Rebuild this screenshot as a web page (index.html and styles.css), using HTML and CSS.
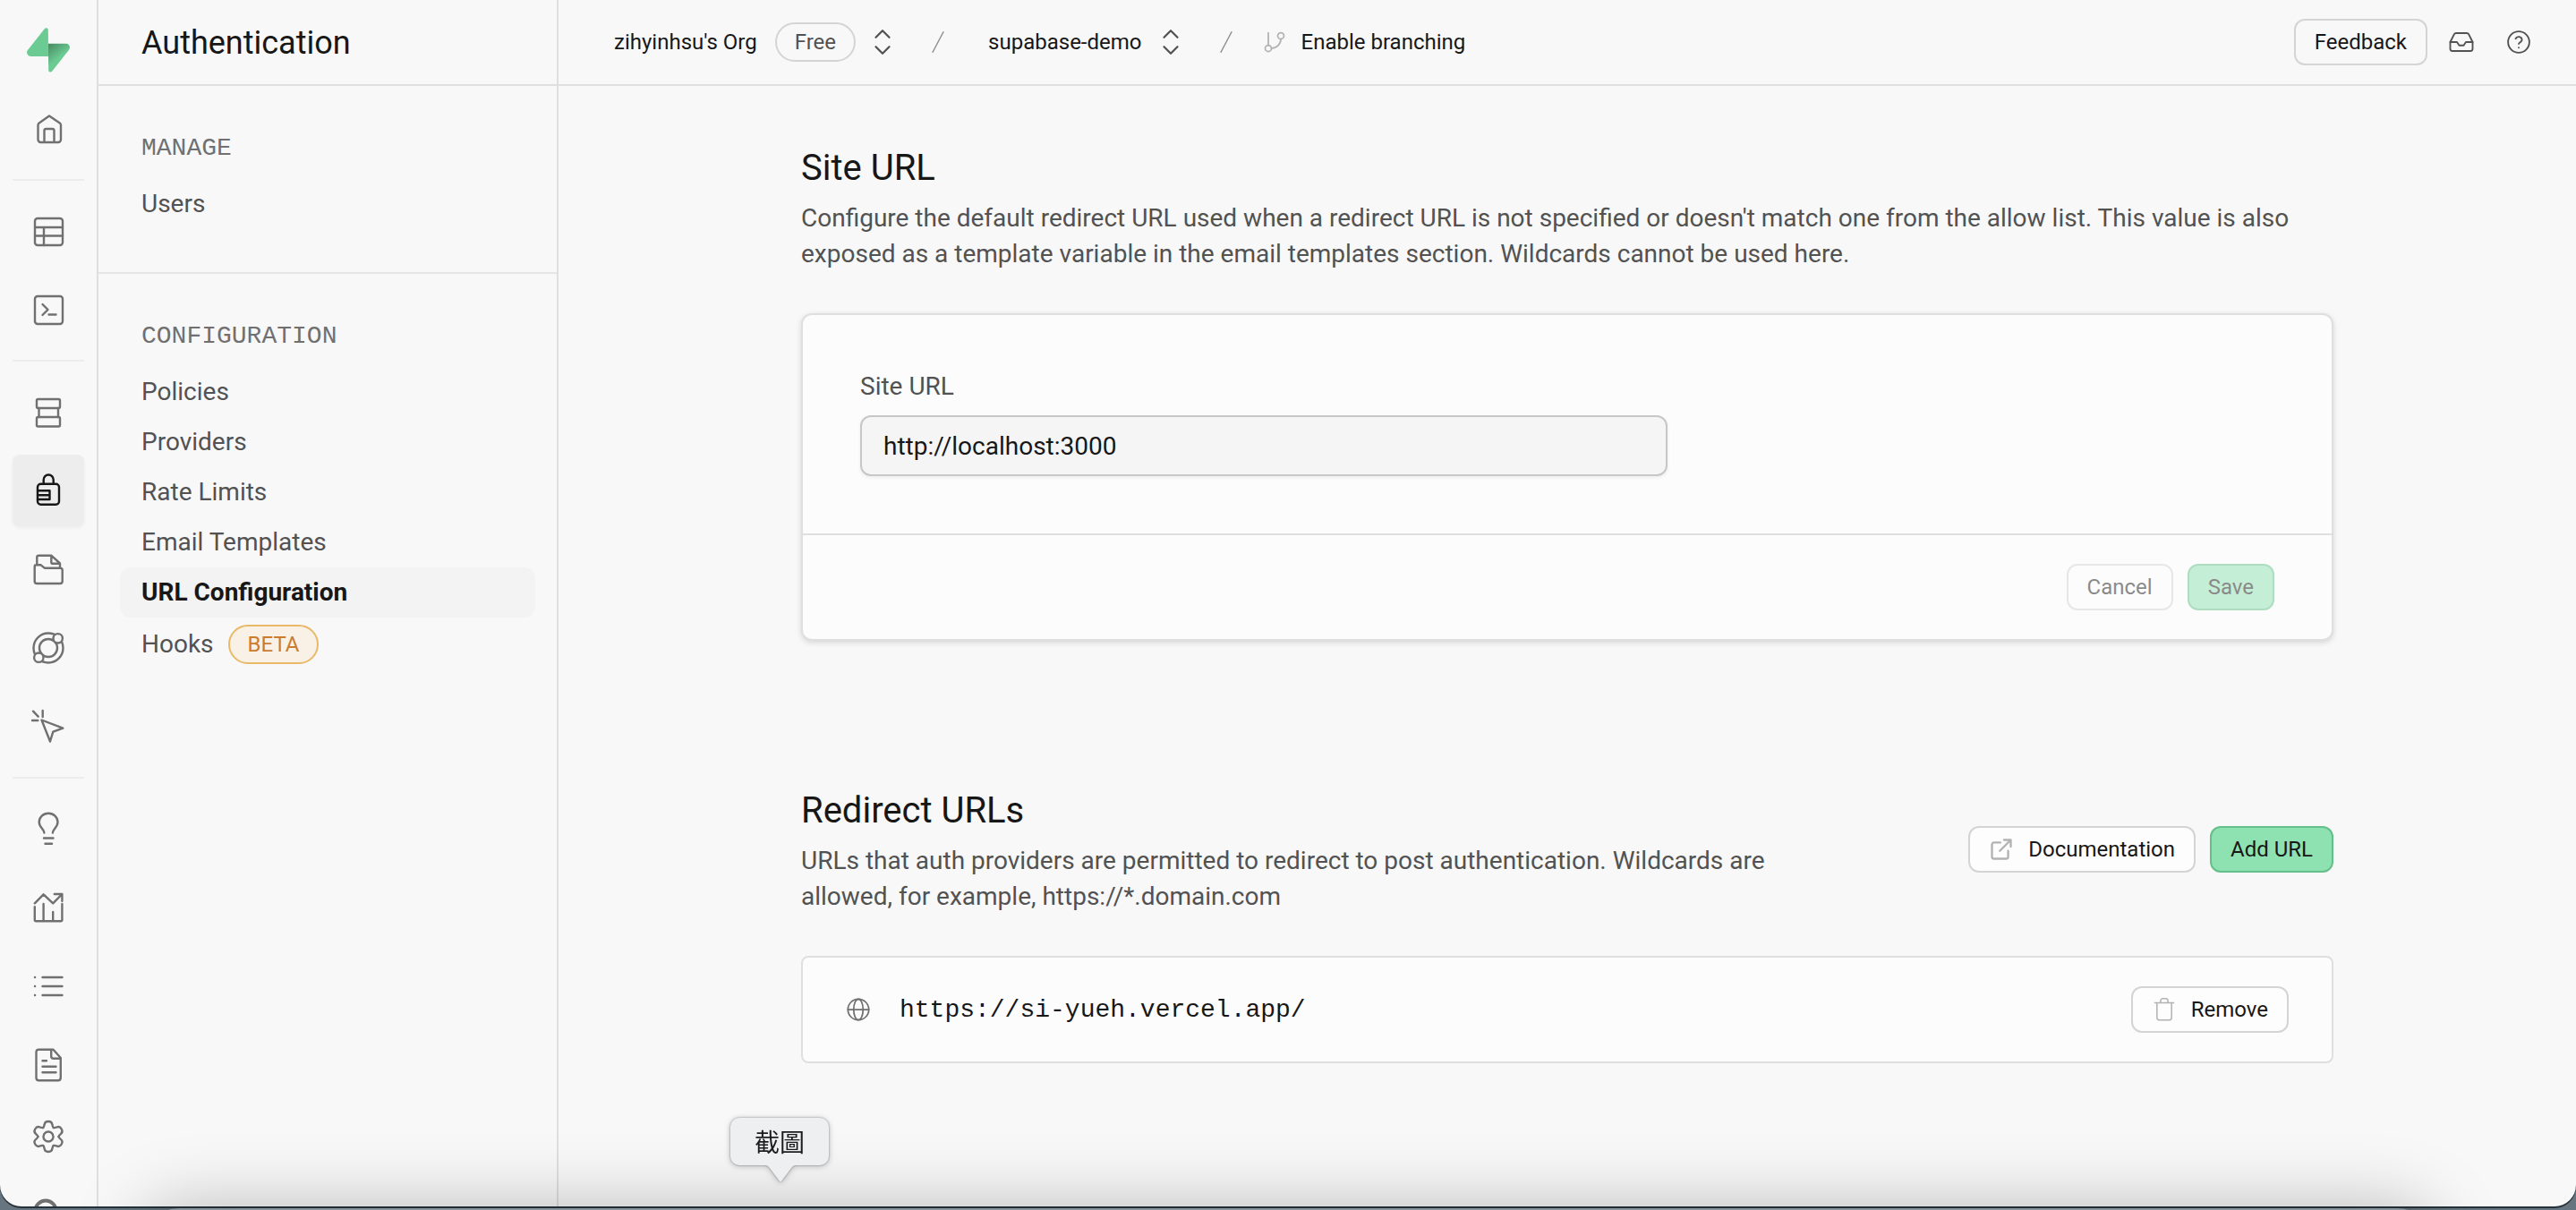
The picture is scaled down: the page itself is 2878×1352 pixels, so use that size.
FILE: index.html
```html
<!DOCTYPE html>
<html lang="en">
<head>
<meta charset="utf-8">
<meta name="viewport" content="width=device-width, initial-scale=1">
<title>URL Configuration | Authentication</title>
<link rel="stylesheet" href="styles.css">
</head>
<body>
<div class="window">
  <nav class="rail" aria-label="Project">
    <a class="rail-logo" href="#" aria-label="Supabase">
      <svg width="48" height="50" viewBox="0 0 109 113" fill="none">
        <defs>
          <linearGradient id="bolt" x1="54" y1="40" x2="82" y2="76" gradientUnits="userSpaceOnUse">
            <stop stop-color="#47885f"/><stop offset="1" stop-color="#6bcb93"/>
          </linearGradient>
        </defs>
        <path fill="url(#bolt)" d="M63.708 110.284c-2.86 3.601-8.658 1.628-8.727-2.97l-1.007-67.251h45.22c8.19 0 12.758 9.46 7.665 15.874L63.708 110.284Z"/>
        <path fill="#6bcb93" d="M45.317 2.071c2.86-3.601 8.657-1.628 8.726 2.97l.442 67.251H9.83c-8.19 0-12.759-9.46-7.665-15.875L45.317 2.071Z"/>
      </svg>
    </a>
    <a class="rail-item" href="#" aria-label="Home"><svg class="icon" viewBox="0 0 40 40"><path d="M21 5.500 9.700 13.400Q8.500 14.300 8.500 16V32a3 3 0 0 0 3 3H31a3 3 0 0 0 3-3V16q0-1.700-1.200-2.600ZM15.500 35V22q0-2 2-2h7q2 0 2 2v13"/></svg></a>
    <hr class="rail-rule">
    <a class="rail-item" href="#" aria-label="Table Editor"><svg class="icon" viewBox="0 0 40 40"><rect x="5" y="6" width="31" height="30" rx="3"/><path d="M5 16h31M5 25.500h31M15 16v20"/></svg></a>
    <a class="rail-item" href="#" aria-label="SQL Editor"><svg class="icon" viewBox="0 0 40 40"><rect x="5" y="5" width="31" height="31" rx="3"/><path d="m13.500 14 6 6-6 6M20.500 25.500h8"/></svg></a>
    <hr class="rail-rule">
    <a class="rail-item" href="#" aria-label="Database"><svg class="icon" viewBox="0 0 40 40"><rect x="7" y="6" width="26" height="10" rx="1.500"/><path d="M9.500 16v10M31 16v10"/><rect x="7" y="26" width="26" height="10.500" rx="1.500"/></svg></a>
    <a class="rail-item rail-item-active" href="#" aria-label="Authentication" aria-current="page"><svg class="icon" viewBox="0 0 40 40"><rect x="8" y="12.700" width="24" height="23" rx="3.500"/><path d="M14.700 12.700V8a5.500 5.500 0 0 1 11 0v4.700M8 20.300h13.500V30H8M8 25.200h13.500"/></svg></a>
    <a class="rail-item" href="#" aria-label="Storage"><svg class="icon" viewBox="0 0 40 40"><path d="M7.300 15.300V6.500q0-1.800 1.800-1.800h14.200L33 13.500v5.200M23.300 4.700v7.500q0 1.600 1.600 1.600H33M4.700 17q0-1.700 1.700-1.700h5.300l4 3.400h17.600q2.400 0 2.400 2.400v12.400q0 2.500-2.500 2.500H7.200q-2.500 0-2.500-2.500Z"/></svg></a>
    <a class="rail-item" href="#" aria-label="Realtime"><svg class="icon" viewBox="0 0 40 40"><circle cx="20" cy="20" r="16.500"/><circle cx="20" cy="20" r="10"/><circle class="knob" cx="30.700" cy="9.300" r="5.200"/><circle class="knob" cx="9.300" cy="30.700" r="5.200"/></svg></a>
    <a class="rail-item" href="#" aria-label="Advisors"><svg class="icon" viewBox="0 0 40 40"><path d="m12.500 12.500 23.800 9.200-11 4-3.300 10.800ZM13.700 2v7M3 2.700l5.700 6M2 13h6.300"/></svg></a>
    <hr class="rail-rule">
    <a class="rail-item" href="#" aria-label="Assistant"><svg class="icon" viewBox="0 0 40 40"><path d="M15.400 24.500c0-4-5.700-6-5.700-12a10.400 9.800 0 0 1 20.800 0c0 6-5.600 8-5.600 12M15 30.500h10.500M16.500 36.700H24"/></svg></a>
    <a class="rail-item" href="#" aria-label="Reports"><svg class="icon" viewBox="0 0 40 40"><path d="m4.800 15.300 9.800-10 10.600 10L35.400 5M26.800 5h8.600v7.700M4.800 19.300v14.500q0 1.500 1.500 1.500h27.600q1.500 0 1.500-1.500V16M14.600 16v19M25.200 25v10"/></svg></a>
    <a class="rail-item" href="#" aria-label="Logs"><svg class="icon" viewBox="0 0 40 40"><path d="M13.500 10h22M13.500 20h22M13.500 30h22M5 10h.1M5 20h.1M5 30h.1"/></svg></a>
    <a class="rail-item" href="#" aria-label="API Docs"><svg class="icon" viewBox="0 0 40 40"><path d="M9.500 2.700h16L33.800 12v22.200q0 3-3 3H9.500q-3 0-3-3V5.700q0-3 3-3ZM23.200 2.700v7.500q0 2.500 2.500 2.500h8.100M13.500 15.300H18M13.500 21.700h15M13.500 28.300h15"/></svg></a>
    <div class="rail-bottom">
      <a class="rail-item" href="#" aria-label="Project Settings"><svg class="icon" viewBox="-20 -20 40 40">
        <defs><path id="lobe" d="M-5.800-10c.9-.6 1.200-2 1.500-3.700C-4-16-2.200-17 0-17s4 1 4.300 3.300c.3 1.700.6 3.100 1.500 3.700"/></defs>
        <circle r="5.500"/><use href="#lobe"/><use href="#lobe" transform="rotate(60)"/><use href="#lobe" transform="rotate(120)"/><use href="#lobe" transform="rotate(180)"/><use href="#lobe" transform="rotate(240)"/><use href="#lobe" transform="rotate(300)"/></svg></a>
      <a class="rail-item" href="#" aria-label="Account"><svg class="icon icon-bold" viewBox="0 0 40 40"><circle cx="17" cy="23" r="11.500"/></svg></a>
    </div>
  </nav>

  <aside class="menu">
    <header class="menu-head"><h1>Authentication</h1></header>
    <section class="menu-group">
      <h2>MANAGE</h2>
      <ul><li><a href="#">Users</a></li></ul>
    </section>
    <section class="menu-group">
      <h2>CONFIGURATION</h2>
      <ul>
        <li><a href="#">Policies</a></li>
        <li><a href="#">Providers</a></li>
        <li><a href="#">Rate Limits</a></li>
        <li><a href="#">Email Templates</a></li>
        <li><a class="current" href="#" aria-current="page">URL Configuration</a></li>
        <li><a class="with-badge" href="#">Hooks <span class="badge badge-beta">BETA</span></a></li>
      </ul>
    </section>
  </aside>

  <div class="page">
    <header class="topbar">
      <nav class="crumbs" aria-label="Breadcrumb">
        <a class="crumb-org" href="#">zihyinhsu's Org <span class="badge">Free</span></a>
        <button class="switcher" type="button" aria-label="Switch organization"><svg width="36" height="36" viewBox="0 0 24 24"><path d="m7 15.500 5 5 5-5M7 8.500l5-5 5 5"/></svg></button>
        <svg class="slash" width="32" height="32" viewBox="0 0 24 24"><path d="M16.500 3.500 7.500 20.500"/></svg>
        <a class="crumb-project" href="#">supabase-demo</a>
        <button class="switcher" type="button" aria-label="Switch project"><svg width="36" height="36" viewBox="0 0 24 24"><path d="m7 15.500 5 5 5-5M7 8.500l5-5 5 5"/></svg></button>
        <svg class="slash" width="32" height="32" viewBox="0 0 24 24"><path d="M16.500 3.500 7.500 20.500"/></svg>
        <button class="branching" type="button"><svg width="28" height="28" viewBox="0 0 24 24"><path d="M6 3v12"/><circle cx="18" cy="6" r="3"/><circle cx="6" cy="18" r="3"/><path d="M18 9a9 9 0 0 1-9 9"/></svg>Enable branching</button>
      </nav>
      <div class="tools">
        <button class="btn btn-clear" type="button">Feedback</button>
        <button class="tool" type="button" aria-label="Notifications"><svg width="30" height="30" viewBox="0 0 24 24"><path d="M22 12h-6l-2 3h-4l-2-3H2"/><path d="M5.450 5.110 2 12v6a2 2 0 0 0 2 2h16a2 2 0 0 0 2-2v-6l-3.450-6.890A2 2 0 0 0 16.760 4H7.240a2 2 0 0 0-1.790 1.110z"/></svg></button>
        <button class="tool" type="button" aria-label="Help"><svg width="30" height="30" viewBox="0 0 24 24"><circle cx="12" cy="12" r="9.500"/><path d="M9.200 9a3 3 0 0 1 5.700 1c0 2-2.900 2.500-2.900 3.500M12 17h.01"/></svg></button>
      </div>
    </header>

    <main class="content">
      <section>
        <div class="section-text">
          <h2>Site URL</h2>
          <p>Configure the default redirect URL used when a redirect URL is not specified or doesn't match one from the allow list. This value is also exposed as a template variable in the email templates section. Wildcards cannot be used here.</p>
        </div>
        <form class="card">
          <div class="card-body">
            <div class="field">
              <label for="site-url">Site URL</label>
              <input id="site-url" type="text" value="http://localhost:3000">
            </div>
          </div>
          <footer class="card-foot">
            <button class="btn" type="reset" disabled>Cancel</button>
            <button class="btn btn-primary" type="submit" disabled>Save</button>
          </footer>
        </form>
      </section>

      <section>
        <div class="section-row">
          <div class="section-text section-text-narrow">
            <h2>Redirect URLs</h2>
            <p>URLs that auth providers are permitted to redirect to post authentication. Wildcards are allowed, for example, https://*.domain.com</p>
          </div>
          <div class="actions">
            <a class="btn" href="#"><svg width="28" height="28" viewBox="0 0 24 24"><path d="M14.500 3H21v6.500M21 3 10.500 13.500M18.500 13.500V19a2 2 0 0 1-2 2H5a2 2 0 0 1-2-2V7.500a2 2 0 0 1 2-2h6"/></svg>Documentation</a>
            <button class="btn btn-primary" type="button">Add URL</button>
          </div>
        </div>
        <ul class="url-list">
          <li>
            <svg class="globe" width="28" height="28" viewBox="0 0 24 24"><circle cx="12" cy="12" r="10"/><ellipse cx="12" cy="12" rx="4.500" ry="10"/><path d="M2 12h20"/></svg>
            <code>https://si-yueh.vercel.app/</code>
            <button class="btn btn-remove" type="button"><svg width="28" height="28" viewBox="0 0 24 24"><path d="M3 5.500h18M5 5.500V20a2 2 0 0 0 2 2h10a2 2 0 0 0 2-2V5.500M8.500 5.500V3.500a2 2 0 0 1 2-2h3a2 2 0 0 1 2 2v2"/></svg>Remove</button>
          </li>
        </ul>
      </section>
    </main>
  </div>
</div>

<div class="dock" aria-hidden="true"></div>
<div class="dock-tip" role="tooltip" lang="zh-Hant">截圖<svg width="36" height="20" viewBox="0 0 36 20"><path d="M0 0c4 0 5 2 7 4.500L16 16.500q2 3 4 0L29 4.500C31 2 32 0 36 0"/></svg></div>
</body>
</html>
```

FILE: styles.css
```css
:root {
  --bg: #f8f8f8;
  --surface: #fcfcfc;
  --text: #171717;
  --text-light: #525252;
  --text-lighter: #707070;
  --line: #dfdfdf;
  --line-strong: #d4d4d4;
  --sans: Roboto, "Liberation Sans", "Noto Sans CJK TC", sans-serif;
  --mono: "Liberation Mono", monospace;
}

* {
  box-sizing: border-box;
  margin: 0;
  padding: 0;
}

body {
  height: 100vh;
  overflow: hidden;
  background: #66757f;
  color: var(--text);
  font: 28px/40px var(--sans);
}

a {
  color: inherit;
  text-decoration: none;
}

ul {
  list-style: none;
}

h1,
h2 {
  font-weight: 400;
}

button,
input {
  font: inherit;
  color: inherit;
  border: 0;
  background: none;
}

svg {
  display: block;
  flex: none;
  fill: none;
  stroke-linecap: round;
  stroke-linejoin: round;
}

.window {
  display: flex;
  height: calc(100vh - 4px);
  overflow: hidden;
  border-radius: 0 0 24px 24px;
  background: var(--bg);
  box-shadow: 0 2px 0 #26323b;
}

/* Icon rail */
.rail {
  display: flex;
  flex: none;
  flex-direction: column;
  align-items: center;
  gap: 8px;
  width: 110px;
  border-right: 2px solid var(--line);
}

.rail > * {
  flex: none;
}

.rail-logo {
  padding-top: 31px;
  height: 96px;
}

.rail-item {
  display: grid;
  place-items: center;
  width: 80px;
  height: 80px;
  border-radius: 8px;
  color: var(--text-lighter);
}

.rail-item-active {
  background: #ededed;
  color: var(--text);
  box-shadow: 0 2px 4px rgb(0 0 0 / 5%);
}

.rail-rule {
  width: 80px;
  height: 2px;
  margin: 8px 0;
  border: 0;
  background: #ececec;
}

.rail-bottom {
  margin-top: -8px;
}

.icon {
  width: 40px;
  height: 40px;
  stroke: currentColor;
  stroke-width: 2.4;
}

.icon-bold {
  stroke-width: 4;
}

.knob {
  fill: var(--bg);
}

/* Section menu */
.menu {
  flex: none;
  width: 514px;
  border-right: 2px solid var(--line);
}

.menu-head {
  display: flex;
  align-items: center;
  height: 96px;
  padding: 2px 48px 0;
  border-bottom: 2px solid var(--line);
}

.menu-head h1 {
  font-size: 36px;
}

.menu-group {
  padding: 50px 24px 48px;
}

.menu-group + .menu-group {
  border-top: 2px solid #e6e6e6;
}

.menu-group h2 {
  margin-bottom: 14px;
  padding: 0 24px;
  color: var(--text-lighter);
  font: 28px/40px var(--mono);
}

.menu-group a {
  display: flex;
  align-items: center;
  gap: 16px;
  height: 56px;
  padding: 0 24px;
  border-radius: 12px;
  color: var(--text-light);
}

.menu-group .current {
  background: #f3f3f3;
  color: var(--text);
  font-weight: 700;
}

.menu-group .with-badge {
  height: 60px;
}

.badge {
  display: inline-flex;
  align-items: center;
  height: 44px;
  padding: 0 20px;
  border: 2px solid var(--line-strong);
  border-radius: 22px;
  color: var(--text-light);
  font-size: 24px;
}

.badge-beta {
  border-color: #e9b968;
  background: #f9f1e5;
  color: #cc7c2e;
}

/* Page */
.page {
  flex: 1;
  min-width: 0;
}

.topbar {
  display: flex;
  align-items: center;
  justify-content: space-between;
  height: 96px;
  padding: 0 38px 0 62px;
  border-bottom: 2px solid var(--line);
  font-size: 24px;
}

.crumbs,
.crumb-org,
.tools,
.actions {
  display: flex;
  align-items: center;
}

.crumb-org {
  gap: 20px;
}

.switcher {
  margin: 0 28px 0 12px;
  stroke: var(--text-light);
  stroke-width: 1.500;
}

.slash {
  stroke: #8f8f8f;
  stroke-width: 1;
}

.crumb-project {
  margin: 0 2px 0 40px;
}

.branching {
  display: flex;
  align-items: center;
  gap: 16px;
  margin-left: 24px;
}

.branching svg {
  stroke: #b2b2b2;
  stroke-width: 1.500;
}

.tools {
  gap: 12px;
}

.tool {
  display: grid;
  place-items: center;
  width: 52px;
  height: 52px;
  stroke: var(--text-light);
  stroke-width: 1.500;
}

.btn {
  display: inline-flex;
  align-items: center;
  gap: 16px;
  height: 52px;
  padding: 0 21px;
  border: 2px solid var(--line-strong);
  border-radius: 12px;
  background: #fdfdfd;
  font-size: 24px;
}

.btn svg {
  stroke: #b2b2b2;
  stroke-width: 2;
}

.btn-clear {
  background: none;
}

.btn-primary {
  border-color: #64bf88;
  background: #8ee1b1;
}

.btn:disabled {
  opacity: .5;
}

.btn-remove svg {
  stroke-width: 1.300;
}

.content {
  display: grid;
  gap: 164px;
  max-width: 1808px;
  margin: 0 auto;
  padding: 66px 48px;
}

.section-text {
  margin-bottom: 46px;
}

.section-text h2 {
  margin-bottom: 10px;
  font-size: 40px;
  line-height: 52px;
}

.section-text p {
  color: var(--text-light);
}

.section-text-narrow {
  max-width: 1140px;
  margin-bottom: 0;
}

.section-row {
  display: flex;
  align-items: center;
  justify-content: space-between;
  gap: 48px;
  margin-bottom: 46px;
}

.actions {
  gap: 16px;
  padding-bottom: 4px;
}

.card {
  border: 2px solid var(--line);
  border-radius: 12px;
  background: var(--surface);
  box-shadow: 0 2px 6px rgb(0 0 0 / 14%);
}

.card-body {
  display: grid;
  grid-template-columns: repeat(12, 1fr);
  column-gap: 48px;
  padding: 64px;
}

.field {
  display: grid;
  grid-column: span 7;
  gap: 16px;
}

.field label {
  color: var(--text-light);
  line-height: 32px;
}

.field input {
  width: 100%;
  height: 68px;
  padding: 0 24px;
  border: 2px solid #c7c7c7;
  border-radius: 12px;
  background: #f5f5f5;
  box-shadow: 0 2px 4px rgb(0 0 0 / 6%);
}

.card-foot {
  display: flex;
  justify-content: flex-end;
  gap: 16px;
  padding: 32px 64px;
  border-top: 2px solid var(--line);
}

.url-list {
  border: 2px solid var(--line);
  border-radius: 8px;
  background: var(--surface);
}

.url-list li {
  display: flex;
  align-items: center;
  gap: 32px;
  padding: 32px 48px;
}

.url-list code {
  flex: 1;
  padding-top: 2px;
  font-family: var(--mono);
}

.globe {
  stroke: var(--text-lighter);
  stroke-width: 1.500;
}

/* Desktop dock peeking out under the window */
.dock {
  position: fixed;
  top: calc(100vh - 2px);
  right: 160px;
  left: 160px;
  height: 200px;
  border-radius: 40px;
  background: #8a949c;
  box-shadow: 0 0 80px rgb(0 0 0 / 26%);
}

.dock-tip {
  position: fixed;
  bottom: 50px;
  left: 816px;
  display: grid;
  place-items: center;
  width: 110px;
  height: 53px;
  padding-bottom: 2px;
  border-radius: 10px;
  background: #eeeff1;
  color: #1c1c1c;
  font-family: "Noto Sans CJK TC", sans-serif;
  filter: drop-shadow(0 0 1px rgb(0 0 0 / 35%)) drop-shadow(0 1px 3px rgb(0 0 0 / 25%));
}

.dock-tip svg {
  position: absolute;
  top: 100%;
  left: 38px;
  fill: #eeeff1;
}
```
